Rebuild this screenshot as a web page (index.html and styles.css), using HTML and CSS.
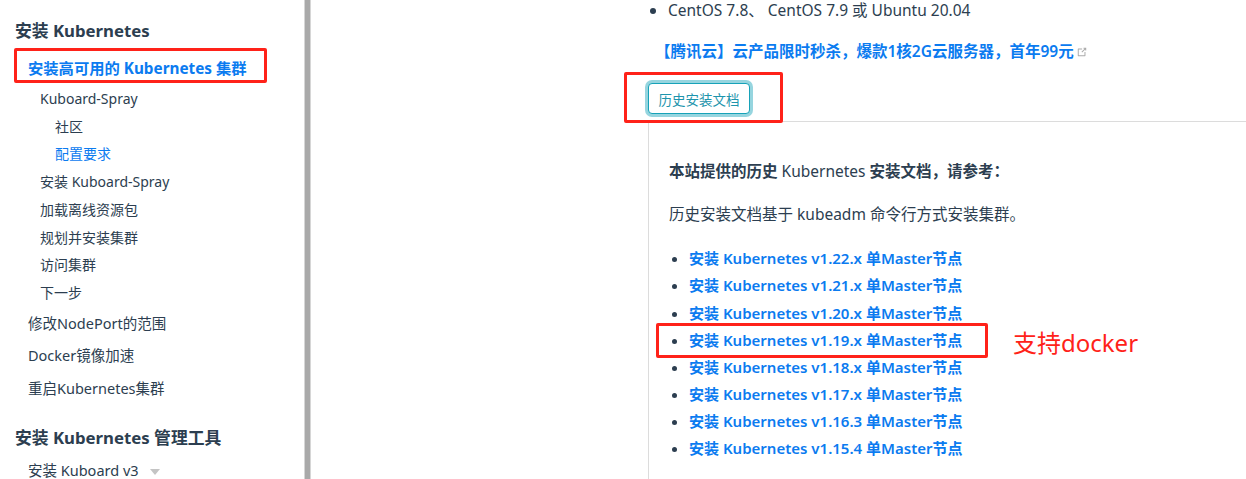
FILE: index.html
```html
<!DOCTYPE html>
<html lang="zh">
<head>
<meta charset="utf-8">
<title>安装 Kubernetes</title>
<link rel="stylesheet" href="styles.css">
</head>
<body>
<div class="page">
  <aside class="sidebar">
    <h3 class="sb-head">安装 Kubernetes</h3>
    <a class="sb-active">安装高可用的 Kubernetes 集群</a>
    <div class="sb-sub">
      <a class="sb-l2">Kuboard-Spray</a>
      <a class="sb-l3">社区</a>
      <a class="sb-l3 sb-cur">配置要求</a>
      <a class="sb-l2">安装 Kuboard-Spray</a>
      <a class="sb-l2">加载离线资源包</a>
      <a class="sb-l2">规划并安装集群</a>
      <a class="sb-l2">访问集群</a>
      <a class="sb-l2">下一步</a>
    </div>
    <a class="sb-l1">修改NodePort的范围</a>
    <a class="sb-l1">Docker镜像加速</a>
    <a class="sb-l1">重启Kubernetes集群</a>
    <h3 class="sb-head sb-head2">安装 Kubernetes 管理工具</h3>
    <a class="sb-l1 sb-last">安装 Kuboard v3 <span class="caret"></span></a>
  </aside>
  <div class="divider"></div>
  <main class="content">
    <ul class="os-list">
      <li>CentOS 7.8、 CentOS 7.9 或 Ubuntu 20.04</li>
    </ul>
    <p class="promo"><a>【腾讯云】云产品限时秒杀，爆款1核2G云服务器，首年99元</a><svg class="ext" width="12" height="12" viewBox="0 0 100 100"><path d="M18.8,85.1h56l0,0c2.2,0,4-1.8,4-4v-32h-8v28h-48v-48h28v-8h-32l0,0c-2.2,0-4,1.8-4,4v56C14.8,83.3,16.6,85.1,18.8,85.1z" fill="#aaa"/><polygon points="45.7,48.7 51.3,54.3 77.2,28.5 77.2,37.2 85.2,37.2 85.2,14.9 62.8,14.9 62.8,22.9 71.5,22.9" fill="#aaa"/></svg></p>
    <button class="hist-btn">历史安装文档</button>
    <div class="hist-box">
      <p class="hist-title"><b>本站提供的历史</b> Kubernetes <b>安装文档，请参考：</b></p>
      <p class="hist-desc">历史安装文档基于 kubeadm 命令行方式安装集群。</p>
      <ul class="ver-list">
        <li><a>安装 Kubernetes v1.22.x 单Master节点</a></li>
        <li><a>安装 Kubernetes v1.21.x 单Master节点</a></li>
        <li><a>安装 Kubernetes v1.20.x 单Master节点</a></li>
        <li><a>安装 Kubernetes v1.19.x 单Master节点</a></li>
        <li><a>安装 Kubernetes v1.18.x 单Master节点</a></li>
        <li><a>安装 Kubernetes v1.17.x 单Master节点</a></li>
        <li><a>安装 Kubernetes v1.16.3 单Master节点</a></li>
        <li><a>安装 Kubernetes v1.15.4 单Master节点</a></li>
      </ul>
    </div>
  </main>
  <div class="mark mark-sidebar"></div>
  <div class="mark mark-btn"></div>
  <div class="mark mark-ver"></div>
  <div class="note">支持docker</div>
</div>
</body>
</html>
```

FILE: styles.css
```css
html, body {
  margin: 0;
  padding: 0;
  background: #fff;
  overflow: hidden;
}
body {
  font-family: "Noto Sans", "Noto Sans CJK SC", sans-serif;
  color: #2c3e50;
  -webkit-font-smoothing: antialiased;
}
.page {
  position: relative;
  display: flex;
  height: 479px;
  overflow: hidden;
}
.sidebar {
  width: 304px;
  flex: none;
  display: flex;
  flex-direction: column;
  align-items: flex-start;
  font-size: 14px;
}
.sidebar a { color: #2c3e50; text-decoration: none; white-space: nowrap; }
.sb-head {
  margin: 19px 0 0 15px;
  font-size: 16.8px;
  font-weight: 700;
  line-height: 24px;
}
.sb-head2 { margin-top: 21.75px; }
.sb-active {
  margin: 13px 0 0 28px;
  line-height: 24px;
  font-size: 15.3px;
  font-weight: 700;
  color: #0b7bf0 !important;
}
.sb-sub {
  display: flex;
  flex-direction: column;
  margin-top: 5px;
}
.sb-l2, .sb-l3 { line-height: 27.7px; }
.sb-l2 { padding-left: 40px; }
.sb-l3 { padding-left: 55px; }
.sb-cur { color: #0b7bf0 !important; }
.sb-l1 { padding-left: 28px; line-height: 32.5px; font-size: 14.5px; }
.sb-last { margin-top: 5.75px; line-height: 28px; }
.caret {
  display: inline-block;
  margin-left: 8px;
  vertical-align: middle;
  border-left: 5px solid transparent;
  border-right: 5px solid transparent;
  border-top: 6px solid #c4c4c4;
}
.divider {
  flex: none;
  width: 5px;
  background: #a9a9a9;
  border-left: 1px solid #d6d6d6;
  border-right: 1px solid #d6d6d6;
}
.content {
  flex: 1;
  padding-left: 337px;
  font-size: 15.5px;
  line-height: 25.5px;
  min-width: 0;
}
.content a { color: #0b7bf0; text-decoration: none; font-weight: 600; }
.os-list {
  margin: 0;
  padding-left: 20px;
  line-height: 20px;
}
.os-list li::marker { color: #2c3e50; }
.promo {
  margin: 19.25px 0 0 7px;
  white-space: nowrap;
}
.ext { margin-left: 2px; vertical-align: -1px; }
.hist-btn {
  display: block;
  margin: 18.5px 0 0;
  height: 31px;
  width: 102px;
  padding: 0;
  font-family: inherit;
  font-size: 13.5px;
  color: #1e95ad;
  background: #fff;
  border: 1px solid #17a2b8;
  border-radius: 4px;
  box-shadow: 0 0 0 3px rgba(23, 162, 184, 0.45);
}
.hist-box {
  margin-top: 7px;
  border-top: 1px solid #dcdcdc;
  border-left: 1px solid #dcdcdc;
  padding: 37px 0 20px 20px;
}
.hist-box p { margin: 0; white-space: nowrap; }
.hist-title { font-weight: 400; }
.hist-title b { font-weight: 700; }
.hist-desc { margin-top: 17.5px !important; }
.ver-list {
  margin: 17.5px 0 0;
  padding-left: 20px;
  line-height: 27.15px;
  font-size: 15px;
}
.ver-list li { white-space: nowrap; }
.ver-list li::marker { color: #2c3e50; }
.mark {
  position: absolute;
  border: 3px solid #ff2219;
  border-radius: 2px;
  box-sizing: border-box;
}
.mark-sidebar { left: 14px; top: 48px; width: 253px; height: 35px; }
.mark-btn { left: 624px; top: 72px; width: 159px; height: 51px; }
.mark-ver { left: 656px; top: 323px; width: 332px; height: 35px; }
.note {
  position: absolute;
  left: 1013px;
  top: 326px;
  font-size: 24px;
  line-height: 34px;
  color: #ff2219;
}
```
